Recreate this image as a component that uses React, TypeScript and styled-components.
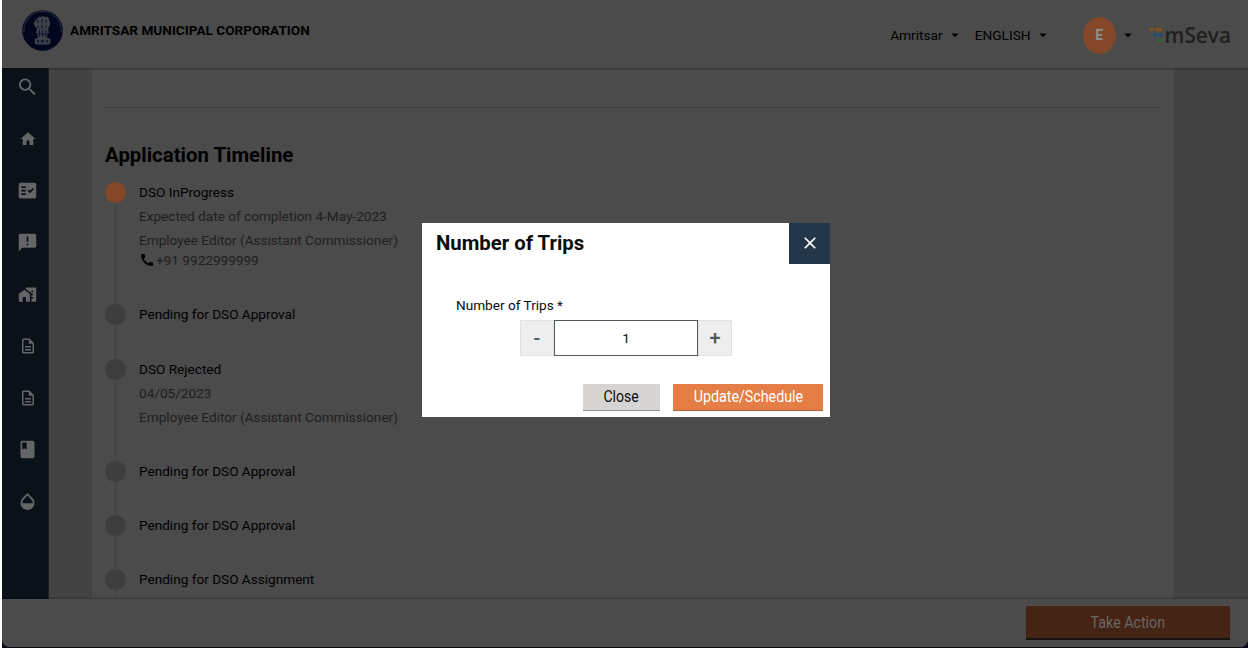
import React from "react";
import styled, { createGlobalStyle } from "styled-components";
import {
  MdSearch, MdHome, MdFactCheck, MdAnnouncement, MdHomeWork, MdOutlineDescription,
  MdBook, MdOpacity, MdArrowDropDown, MdCall, MdClose,
} from "react-icons/md";

const Global = createGlobalStyle`
  * { box-sizing: border-box; }
  body { margin: 0; background: #fff; font-family: Roboto, sans-serif; overflow: hidden; }
`;

const Page = styled.div`
  position: relative;
  width: 1248px;
  height: 652px;
  padding: 0 0 4px 2px;
  background: #fff;
`;
const Desktop = styled.div`
  height: 648px;
  background: #0a0a16;
`;
const Frame = styled.div`
  height: 647px;
  display: flex;
  flex-direction: column;
  overflow: hidden;
  border-radius: 0 0 8px 8px;
  background: #4b4b4b;
  color: #000;
`;
const Header = styled.header`
  height: 68px;
  flex: none;
  display: flex;
  align-items: flex-start;
  padding: 10px 17px 0 20px;
  background: #4b4b4b;
  box-shadow: 0 1px 2px rgba(0, 0, 0, 0.3);
  z-index: 1;
`;
const Corporation = styled.div`
  margin: 12px 0 0 7px;
  font-size: 13.6px;
  line-height: 17px;
  font-weight: 700;
  white-space: nowrap;
`;
const Menus = styled.div`
  margin-left: auto;
  display: flex;
  align-items: center;
  height: 50px;
  font-size: 13.7px;
`;
const Menu = styled.div<{ $gap: number }>`
  display: flex;
  align-items: center;
  margin-right: ${(p) => p.$gap}px;
  svg { margin-left: 3px; }
`;
const Avatar = styled.div`
  width: 33px;
  height: 37px;
  border-radius: 50%;
  display: grid;
  place-items: center;
  background: #84472a;
  color: #8f8f8f;
  font-weight: 700;
  font-size: 14px;
`;
const Brand = styled.div`
  display: flex;
  align-items: center;
  gap: 2px;
  color: #202020;
  font: 600 20.8px/24px "Open Sans", sans-serif;
  svg { flex: none; }
`;
const Body = styled.div`
  flex: 1;
  min-height: 0;
  display: flex;
  background: #434343;
`;
const Sidebar = styled.nav`
  width: 47px;
  flex: none;
  display: flex;
  flex-direction: column;
  align-items: center;
  padding: 7px 0 0 5px;
  background: #0b1119;
  border-right: 1px solid #18202a;
  color: #646567;
`;
const NavItem = styled.div<{ $first?: boolean }>`
  height: ${(p) => (p.$first ? 38 : 51.8)}px;
  flex: none;
  display: grid;
  place-items: center;
  transform: translateY(${(p) => (p.$first ? -7.5 : 0)}px);
`;
const Card = styled.main`
  width: 1082px;
  margin-left: 43px;
  padding: 39px 14px 0 13px;
  background: #4b4b4b;
  overflow: hidden;
`;
const Divider = styled.div`
  height: 1px;
  background: #3e3e3e;
`;
const Heading = styled.h2`
  margin: 35px 0 15px;
  font-size: 20.4px;
  line-height: 24px;
`;
const Entry = styled.div<{ $height: number }>`
  height: ${(p) => p.$height}px;
  display: flex;
  gap: 13px;
`;
const Track = styled.div`
  width: 21px;
  display: flex;
  flex-direction: column;
  align-items: center;
`;
const Dot = styled.div<{ $active?: boolean }>`
  width: 21px;
  height: 21px;
  flex: none;
  border-radius: 50%;
  background: ${(p) => (p.$active ? "#84472a" : "#3e3e3e")};
`;
const Line = styled.div`
  width: 1px;
  flex: 1;
  background: #404040;
`;
const Details = styled.div`
  font-size: 13.6px;
  line-height: 20px;
  color: #1e2021;
  white-space: nowrap;
`;
const Status = styled.div`
  color: #000;
`;
const Detail = styled.div`
  margin-top: 4px;
`;
const Phone = styled.div`
  display: flex;
  align-items: center;
  svg { color: #000; margin-right: 1px; }
`;
const Footer = styled.footer`
  height: 48px;
  flex: none;
  display: flex;
  justify-content: flex-end;
  padding: 7px 18px 0 0;
  background: #4b4b4b;
  box-shadow: 0 -1px 2px rgba(0, 0, 0, 0.25);
  z-index: 1;
`;
const Condensed = styled.span<{ $scale: number }>`
  display: inline-block;
  transform: scaleX(${(p) => p.$scale});
  white-space: nowrap;
`;
const Action = styled.button`
  width: 204px;
  height: 34px;
  padding: 0;
  border: 0;
  border-bottom: 2px solid #161311;
  background: #452415;
  color: #6a6663;
  font: 400 16px Roboto, sans-serif;
`;
const Overlay = styled.div`
  position: absolute;
  inset: 0;
  display: flex;
  justify-content: center;
  align-items: flex-start;
  padding: 223px 0 0 4px;
  z-index: 2;
`;
const Dialog = styled.section`
  width: 408px;
  height: 194px;
  background: #fff;
  color: #0b0c0c;
`;
const DialogHeader = styled.div`
  display: flex;
  justify-content: space-between;
  padding-left: 14px;
  h2 { margin: 8px 0 0; font-size: 20.35px; line-height: 24px; }
`;
const CloseIcon = styled.button`
  width: 41px;
  height: 41px;
  padding: 0 0 1px;
  border: 0;
  display: grid;
  place-items: center;
  background: #243649;
  color: #fff;
`;
const Label = styled.div`
  margin: 33px 0 6px 34px;
  font-size: 13.6px;
  line-height: 17px;
`;
const Stepper = styled.div`
  display: flex;
  height: 36px;
  margin-left: 98px;
`;
const Step = styled.button`
  width: 34px;
  padding: 0;
  border: 1px solid #e2e2e2;
  background: #eee;
  color: #505a5f;
  font: 500 20px Roboto, sans-serif;
`;
const Value = styled.div`
  width: 144px;
  border: 1px solid #505a5f;
  display: grid;
  place-items: center;
  font-size: 13.65px;
`;
const Buttons = styled.div`
  display: flex;
  justify-content: flex-end;
  gap: 13px;
  padding: 28px 7px 0 0;
`;
const Button = styled.button<{ $primary?: boolean }>`
  width: ${(p) => (p.$primary ? 150 : 77)}px;
  height: 27px;
  padding: 0 0 2px;
  border: 0;
  border-bottom: 1px solid ${(p) => (p.$primary ? "#a75d38" : "#929292")};
  background: ${(p) => (p.$primary ? "#e47e46" : "#d6d5d4")};
  color: ${(p) => (p.$primary ? "#fff" : "#0b0c0c")};
  font: 400 16px Roboto, sans-serif;
`;

const Emblem = () => (
  <svg width="41" height="41" viewBox="0 0 41 41">
    <circle cx="20.5" cy="20.5" r="20.3" fill="#02061f" />
    <path d="M2 22a18.6 18.6 0 1 1 37 0" fill="none" stroke="#3a3d4a" strokeWidth="1.1" strokeDasharray="1.2 .7" />
    <g fill="#3d3f49">
      <path d="M15 9q1-3 4-2 2-2 4 0 4-1 4 3 2 2 1 5l-2 4 1 4H14l1-4-3-4q-1-4 3-6z" />
      <path d="M15 22h11l-1 6h-9z" />
      <rect x="12.5" y="28" width="16" height="6.5" rx="2.5" />
    </g>
    <path d="M16 10v3m4-4v4m4-3v3m-9 3 2 2m3-3v4m5-3-2 2M17.5 20v7m3-7v7m3.5-7v7m-8-3h9" stroke="#11142a" strokeWidth="1" fill="none" />
    <path d="M15 31.3h2m2 0h3m2 0h2" stroke="#11142a" strokeWidth="2" />
  </svg>
);

const BrandMark = () => (
  <svg width="14" height="16" viewBox="0 0 14 16">
    <g fill="#84501a"><circle cx="2.5" cy="2.5" r="2" /><rect x="6" y=".5" width="7" height="4" rx="2" /></g>
    <g fill="#1c4d78"><circle cx="6" cy="8" r="2" /><circle cx="11" cy="8" r="2" /></g>
    <circle cx="11" cy="13.6" r="2" fill="#28702f" />
  </svg>
);

const navIcons = [
  { Icon: MdHome, size: 18 }, { Icon: MdFactCheck, size: 21 }, { Icon: MdAnnouncement, size: 21 },
  { Icon: MdHomeWork, size: 19 }, { Icon: MdOutlineDescription, size: 18 }, { Icon: MdOutlineDescription, size: 18 },
  { Icon: MdBook, size: 21 }, { Icon: MdOpacity, size: 21 },
];

const timeline = [
  { status: "DSO InProgress", height: 122, active: true, details: ["Expected date of completion 4-May-2023", "Employee Editor (Assistant Commissioner)"], phone: "+91 9922999999" },
  { status: "Pending for DSO Approval", height: 54.5, details: [] },
  { status: "DSO Rejected", height: 102, details: ["04/05/2023", "Employee Editor (Assistant Commissioner)"] },
  { status: "Pending for DSO Approval", height: 54.3, details: [] },
  { status: "Pending for DSO Approval", height: 54.3, details: [] },
  { status: "Pending for DSO Assignment", height: 54.3, details: [] },
];

export default function App() {
  return (
    <Page>
      <Global />
      <Desktop>
        <Frame>
          <Header>
            <Emblem />
            <Corporation>AMRITSAR MUNICIPAL CORPORATION</Corporation>
            <Menus>
              <Menu $gap={11}>Amritsar<MdArrowDropDown size={18} /></Menu>
              <Menu $gap={31}>ENGLISH<MdArrowDropDown size={18} /></Menu>
              <Menu $gap={12}><Avatar>E</Avatar><MdArrowDropDown size={18} /></Menu>
              <Brand><BrandMark />mSeva</Brand>
            </Menus>
          </Header>
          <Body>
            <Sidebar>
              <NavItem $first><MdSearch size={23} /></NavItem>
              {navIcons.map(({ Icon, size }, i) => <NavItem key={i}><Icon size={size} /></NavItem>)}
            </Sidebar>
            <Card>
              <Divider />
              <Heading>Application Timeline</Heading>
              {timeline.map((t, i) => (
                <Entry key={i} $height={t.height}>
                  <Track><Dot $active={t.active} /><Line /></Track>
                  <Details>
                    <Status>{t.status}</Status>
                    {t.details.map((d) => <Detail key={d}>{d}</Detail>)}
                    {t.phone && <Phone><MdCall size={16} />{t.phone}</Phone>}
                  </Details>
                </Entry>
              ))}
            </Card>
          </Body>
          <Footer><Action><Condensed $scale={0.89}>Take Action</Condensed></Action></Footer>
        </Frame>
      </Desktop>
      <Overlay>
        <Dialog>
          <DialogHeader>
            <h2>Number of Trips</h2>
            <CloseIcon><MdClose size={20} /></CloseIcon>
          </DialogHeader>
          <Label>Number of Trips *</Label>
          <Stepper><Step>-</Step><Value>1</Value><Step>+</Step></Stepper>
          <Buttons>
            <Button><Condensed $scale={0.88}>Close</Condensed></Button>
            <Button $primary><Condensed $scale={0.89}>Update/Schedule</Condensed></Button>
          </Buttons>
        </Dialog>
      </Overlay>
    </Page>
  );
}
